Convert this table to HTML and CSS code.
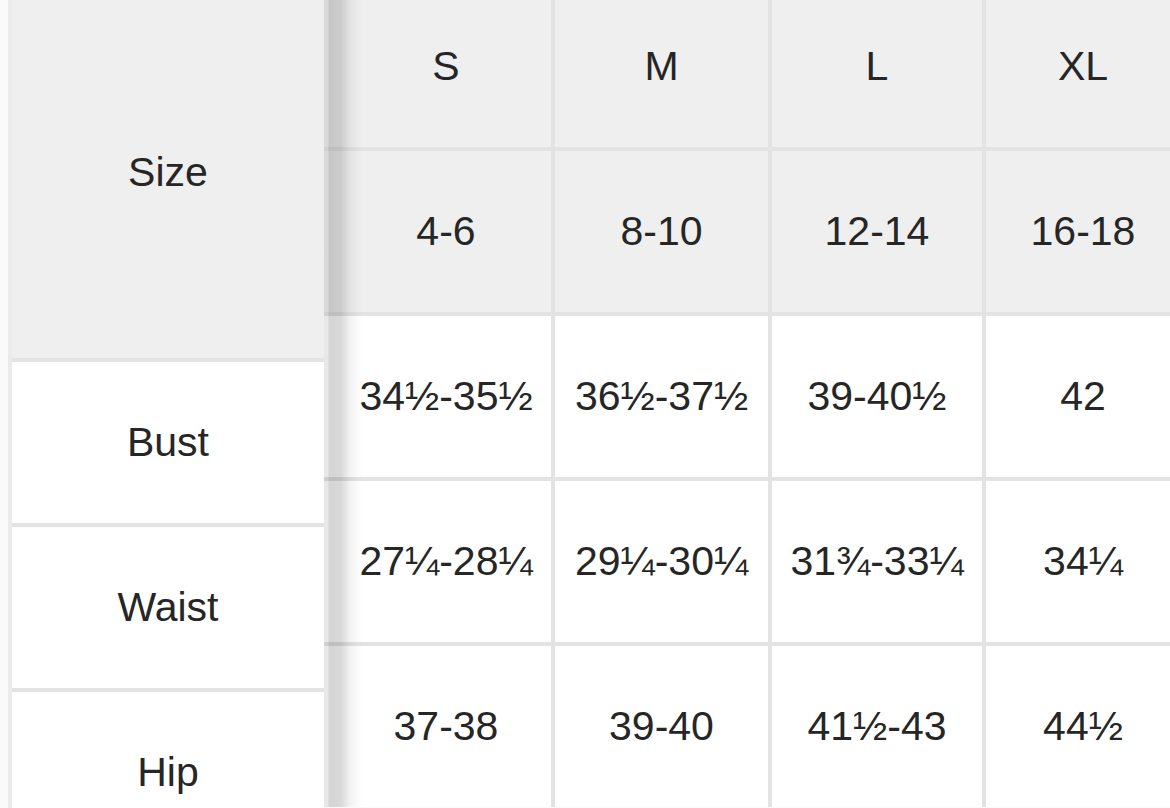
FILE: index.html
```html
<!DOCTYPE html>
<html lang="en">
<head>
<meta charset="utf-8">
<title>Size chart</title>
<link rel="stylesheet" href="styles.css">
</head>
<body>
<div class="chart">
  <div class="labels">
    <div class="cell head">Size</div>
    <div class="cell">Bust</div>
    <div class="cell">Waist</div>
    <div class="cell">Hip</div>
  </div>
  <div class="sizes">
    <div class="cell head first">S</div>
    <div class="cell head">M</div>
    <div class="cell head">L</div>
    <div class="cell head">XL</div>

    <div class="cell head first">4-6</div>
    <div class="cell head">8-10</div>
    <div class="cell head">12-14</div>
    <div class="cell head">16-18</div>

    <div class="cell first">34½-35½</div>
    <div class="cell">36½-37½</div>
    <div class="cell">39-40½</div>
    <div class="cell">42</div>

    <div class="cell first">27¼-28¼</div>
    <div class="cell">29¼-30¼</div>
    <div class="cell">31¾-33¼</div>
    <div class="cell">34¼</div>

    <div class="cell first">37-38</div>
    <div class="cell">39-40</div>
    <div class="cell">41½-43</div>
    <div class="cell">44½</div>
  </div>
</div>
</body>
</html>
```

FILE: styles.css
```css
html, body {
  margin: 0;
  padding: 0;
  background: #fafafa;
  overflow: hidden;
  height: 100%;
}

.chart {
  display: flex;
  align-items: flex-start;
  margin-top: -14px;
  padding-left: 8px;
  font-family: "Liberation Sans", Arial, sans-serif;
  font-size: 41px;
  color: #262626;
}

.cell {
  display: flex;
  align-items: center;
  justify-content: center;
  background: #ffffff;
  white-space: nowrap;
}

.cell.head {
  background: #efefef;
}

.labels {
  display: grid;
  grid-template-columns: 312px;
  grid-template-rows: 372px 161px 161px 161px;
  row-gap: 4px;
  background: #e3e3e3;
  border-left: 4px solid #ebebeb;
  flex: none;
}

.sizes {
  position: relative;
  display: grid;
  grid-template-columns: 227px 213px 210px 194px;
  grid-template-rows: repeat(5, 161px);
  gap: 4px;
  background: #e3e3e3;
  flex: none;
}

.sizes .first {
  padding-left: 17px;
}

.sizes::before {
  content: "";
  position: absolute;
  left: 0;
  top: 0;
  bottom: 0;
  width: 40px;
  background: linear-gradient(to right,
    rgba(0, 0, 0, 0.09) 0px,
    rgba(0, 0, 0, 0.09) 4px,
    rgba(0, 0, 0, 0.17) 5px,
    rgba(0, 0, 0, 0.15) 17px,
    rgba(0, 0, 0, 0.05) 26px,
    rgba(0, 0, 0, 0) 38px);
  pointer-events: none;
}
```
